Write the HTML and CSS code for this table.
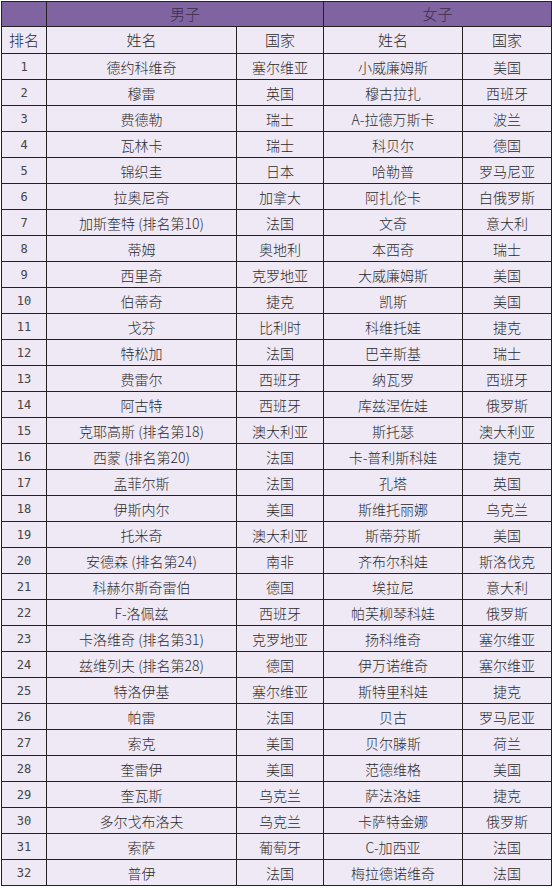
FILE: index.html
```html
<!DOCTYPE html>
<html lang="zh-CN">
<head>
<meta charset="utf-8">
<title>排名</title>
<link rel="stylesheet" href="styles.css">
</head>
<body>
<table class="rank">
<colgroup>
<col class="c-rank"><col class="c-name"><col class="c-nat"><col class="c-wname"><col class="c-wnat">
</colgroup>
<thead>
<tr class="group"><th></th><th colspan="2">男子</th><th colspan="2">女子</th></tr>
<tr class="sub"><th>排名</th><th>姓名</th><th>国家</th><th>姓名</th><th>国家</th></tr>
</thead>
<tbody>
<tr><td class="n">1</td><td>德约科维奇</td><td>塞尔维亚</td><td>小威廉姆斯</td><td>美国</td></tr>
<tr><td class="n">2</td><td>穆雷</td><td>英国</td><td>穆古拉扎</td><td>西班牙</td></tr>
<tr><td class="n">3</td><td>费德勒</td><td>瑞士</td><td>A-拉德万斯卡</td><td>波兰</td></tr>
<tr><td class="n">4</td><td>瓦林卡</td><td>瑞士</td><td>科贝尔</td><td>德国</td></tr>
<tr><td class="n">5</td><td>锦织圭</td><td>日本</td><td>哈勒普</td><td>罗马尼亚</td></tr>
<tr><td class="n">6</td><td>拉奥尼奇</td><td>加拿大</td><td>阿扎伦卡</td><td>白俄罗斯</td></tr>
<tr><td class="n">7</td><td>加斯奎特 (排名第10)</td><td>法国</td><td>文奇</td><td>意大利</td></tr>
<tr><td class="n">8</td><td>蒂姆</td><td>奥地利</td><td>本西奇</td><td>瑞士</td></tr>
<tr><td class="n">9</td><td>西里奇</td><td>克罗地亚</td><td>大威廉姆斯</td><td>美国</td></tr>
<tr><td class="n">10</td><td>伯蒂奇</td><td>捷克</td><td>凯斯</td><td>美国</td></tr>
<tr><td class="n">11</td><td>戈芬</td><td>比利时</td><td>科维托娃</td><td>捷克</td></tr>
<tr><td class="n">12</td><td>特松加</td><td>法国</td><td>巴辛斯基</td><td>瑞士</td></tr>
<tr><td class="n">13</td><td>费雷尔</td><td>西班牙</td><td>纳瓦罗</td><td>西班牙</td></tr>
<tr><td class="n">14</td><td>阿古特</td><td>西班牙</td><td>库兹涅佐娃</td><td>俄罗斯</td></tr>
<tr><td class="n">15</td><td>克耶高斯 (排名第18)</td><td>澳大利亚</td><td>斯托瑟</td><td>澳大利亚</td></tr>
<tr><td class="n">16</td><td>西蒙 (排名第20)</td><td>法国</td><td>卡-普利斯科娃</td><td>捷克</td></tr>
<tr><td class="n">17</td><td>孟菲尔斯</td><td>法国</td><td>孔塔</td><td>英国</td></tr>
<tr><td class="n">18</td><td>伊斯内尔</td><td>美国</td><td>斯维托丽娜</td><td>乌克兰</td></tr>
<tr><td class="n">19</td><td>托米奇</td><td>澳大利亚</td><td>斯蒂芬斯</td><td>美国</td></tr>
<tr><td class="n">20</td><td>安德森 (排名第24)</td><td>南非</td><td>齐布尔科娃</td><td>斯洛伐克</td></tr>
<tr><td class="n">21</td><td>科赫尔斯奇雷伯</td><td>德国</td><td>埃拉尼</td><td>意大利</td></tr>
<tr><td class="n">22</td><td>F-洛佩兹</td><td>西班牙</td><td>帕芙柳琴科娃</td><td>俄罗斯</td></tr>
<tr><td class="n">23</td><td>卡洛维奇 (排名第31)</td><td>克罗地亚</td><td>扬科维奇</td><td>塞尔维亚</td></tr>
<tr><td class="n">24</td><td>兹维列夫 (排名第28)</td><td>德国</td><td>伊万诺维奇</td><td>塞尔维亚</td></tr>
<tr><td class="n">25</td><td>特洛伊基</td><td>塞尔维亚</td><td>斯特里科娃</td><td>捷克</td></tr>
<tr><td class="n">26</td><td>帕雷</td><td>法国</td><td>贝古</td><td>罗马尼亚</td></tr>
<tr><td class="n">27</td><td>索克</td><td>美国</td><td>贝尔滕斯</td><td>荷兰</td></tr>
<tr><td class="n">28</td><td>奎雷伊</td><td>美国</td><td>范德维格</td><td>美国</td></tr>
<tr><td class="n">29</td><td>奎瓦斯</td><td>乌克兰</td><td>萨法洛娃</td><td>捷克</td></tr>
<tr><td class="n">30</td><td>多尔戈布洛夫</td><td>乌克兰</td><td>卡萨特金娜</td><td>俄罗斯</td></tr>
<tr><td class="n">31</td><td>索萨</td><td>葡萄牙</td><td>C-加西亚</td><td>法国</td></tr>
<tr><td class="n">32</td><td>普伊</td><td>法国</td><td>梅拉德诺维奇</td><td>法国</td></tr>
</tbody>
</table>
</body>
</html>
```
FILE: styles.css
```css
html, body {
  margin: 0;
  padding: 0;
  background: #ffffff;
}
body {
  padding: 1px 0 0 1px;
}
.rank {
  border-collapse: collapse;
  table-layout: fixed;
  width: 550px;
  font-family: "Noto Sans CJK SC", "Noto Sans", sans-serif;
  font-size: 14px;
  font-weight: 300;
  color: #2a2a2a;
}
.c-rank { width: 45px; }
.c-name { width: 190px; }
.c-nat { width: 87px; }
.c-wname { width: 139px; }
.c-wnat { width: 89px; }
.rank th, .rank td {
  border: 1px solid #222222;
  padding: 0;
  height: 25px;
  text-align: center;
  vertical-align: middle;
  font-weight: 300;
  line-height: 18px;
  background: #efe9f6;
  white-space: nowrap;
}
.rank .group th {
  background: #8064a2;
  color: #3a2f48;
  height: 24px;
  font-size: 15px;
}
.rank .sub th {
  height: 26px;
  font-size: 15px;
}
.rank td.n {
  font-family: "DejaVu Sans Mono", "Liberation Mono", monospace;
  font-size: 12px;
  font-weight: normal;
  color: #444444;
}
```
